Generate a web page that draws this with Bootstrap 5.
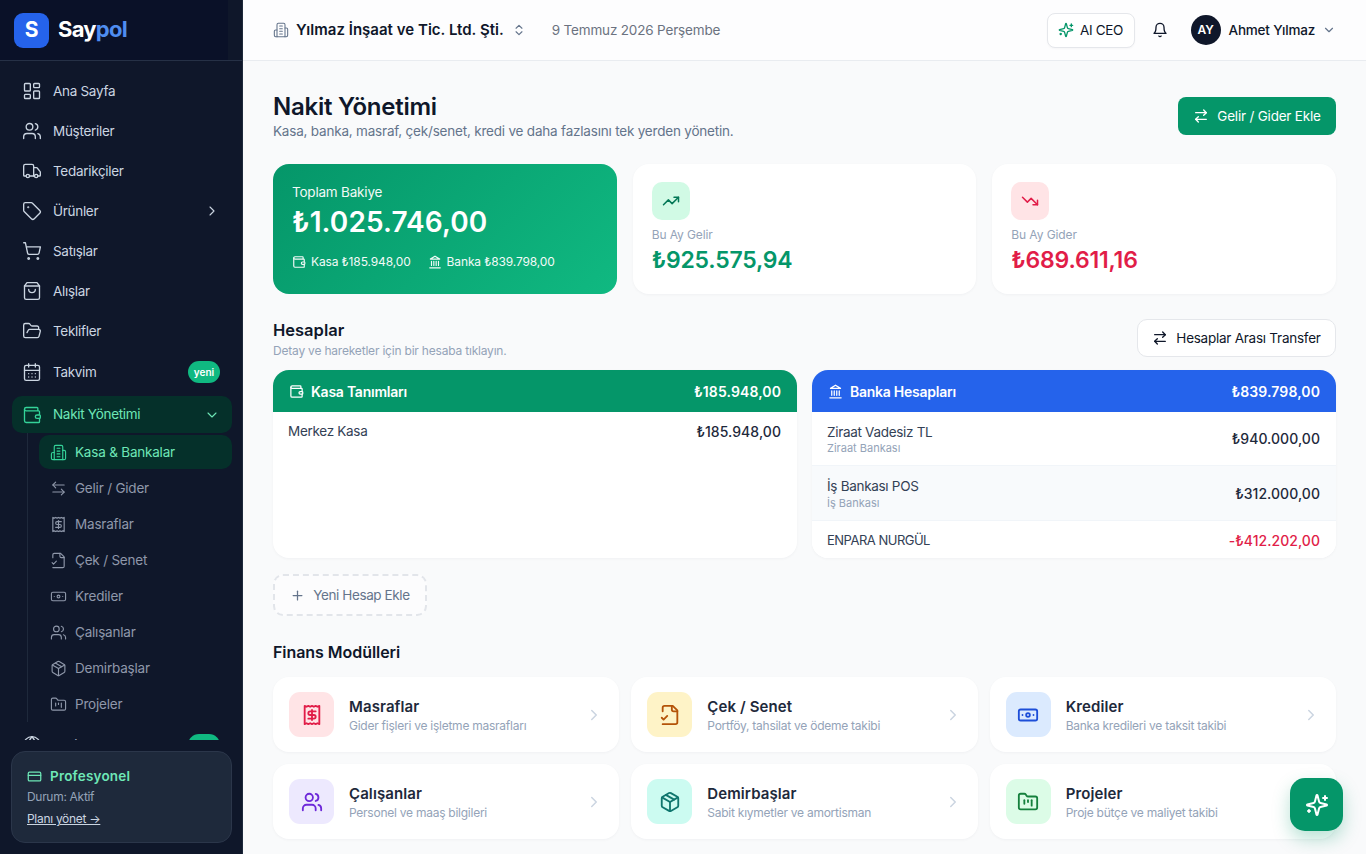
<!DOCTYPE html>
<html lang="tr">
<head>
  <meta charset="UTF-8" />
  <meta name="viewport" content="width=device-width, initial-scale=1.0" />
  <title>Saypol - Nakit Yönetimi</title>
  <link href="https://cdn.jsdelivr.net/npm/bootstrap@5.3.0/dist/css/bootstrap.min.css" rel="stylesheet">
  <style>
    html, body { height: 100%; overflow: hidden; }
    body { background: #f9fafb; font-family: "Inter", "Liberation Sans", sans-serif; color: #0f172a; font-size: 13.5px; letter-spacing: -.2px; }
    svg.ic { fill: none; stroke: currentColor; stroke-width: 2; stroke-linecap: round; stroke-linejoin: round; flex-shrink: 0; display: block; }

    .app-shell { height: 854px; }
    .side { width: 243px; background: #0f172a; border-right: 1px solid #1e293b; flex-shrink: 0; height: 854px; }
    .side-top { height: 61px; border-bottom: 1px solid #263146; flex-shrink: 0; }
    .side-brand { width: 228px; height: 60px; background: #0a1128; padding: 0 0 2px 14px; gap: 9px; }
    .logo-box { width: 35px; height: 35px; border-radius: 9px; background: #2563eb; color: #fff; font-weight: 700; font-size: 21px; margin-top: 2px; }
    .logo-word { font-size: 22px; font-weight: 700; color: #fff; letter-spacing: -.75px; }
    .logo-word span { color: #4f8df0; }
    .side-nav { height: 679px; overflow: hidden; padding: 10px 10px 0 12px; }
    .nav-row { height: 40px; padding: 0 12px 0 10px; gap: 11px; color: #cbd5e1; text-decoration: none; letter-spacing: -.3px; }
    .nav-row svg { stroke-width: 1.6; }
    .nav-row.tall { height: 42px; }
    .nav-row.open { height: 37px; margin-top: 3px; background: #05302a; border-radius: 10px; color: #6ee7b7; }
    .nav-row.open svg { color: #34d399; }
    .nav-row.open svg.chev { color: #6ee7b7; }
    .new-pill { background: #10b981; color: #fff; font-size: 10px; font-weight: 600; border-radius: 12px; width: 32px; height: 22px; letter-spacing: 0; }
    .sub-list { margin: 0 0 2px 15px; padding: 2px 0 0 11px; border-left: 1px solid #1e293b; }
    .sub-row { height: 36px; padding: 0 11px; gap: 8px; color: #8f98aa; text-decoration: none; }
    .sub-row svg { stroke-width: 1.6; }
    .sub-row.here { height: 34px; margin-bottom: 1px; background: #05302a; border-radius: 10px; color: #6ee7b7; }
    .sub-row.here svg { color: #34d399; }
    .plan-area { padding: 11px 10px 0 11px; }
    .plan-card { height: 92px; background: #1e293b; border: 1px solid #2b364a; border-radius: 14px; padding: 14px 15px; }
    .plan-name { color: #6ee7b7; font-weight: 600; letter-spacing: .2px; line-height: 21px; }
    .plan-state { color: #94a3b8; font-size: 12px; margin-top: 1px; line-height: 18px; letter-spacing: -.3px; }
    .plan-link { color: #cbd5e1; font-size: 12px; margin-top: 4px; display: inline-block; line-height: 18px; letter-spacing: -.3px; }

    .main-col { min-width: 0; height: 854px; overflow: hidden; }
    .top-bar { height: 61px; background: #fdfdfe; border-bottom: 1px solid #e9ecf0; padding: 0 30px; flex-shrink: 0; }
    .firm-icon { color: #64748b; stroke-width: 1.6 !important; margin-right: 7px; }
    .firm-name { font-weight: 600; font-size: 15px; letter-spacing: .02px; }
    .firm-arrows { color: #64748b; margin-left: 8px; }
    .today { color: #6b7280; margin-left: 26px; letter-spacing: -.17px; }
    .ceo-btn { height: 35px; width: 88px; background: #fff; border: 1px solid #e5e7eb; border-radius: 8px; font-size: 13.5px; color: #0f172a; padding: 0; gap: 6px; box-shadow: 0 1px 2px rgba(0,0,0,.03); letter-spacing: -.3px; margin-left: auto; }
    .ceo-spark { color: #059669; }
    .bell-ic { margin: 0 23px 0 17px; }
    .avatar { width: 30px; height: 30px; border-radius: 50%; background: #0f172a; color: #fff; font-size: 12px; font-weight: 600; letter-spacing: -.2px; }
    .user-name { font-weight: 500; margin-left: 8px; letter-spacing: -.2px; }
    .user-chev { color: #64748b; margin-left: 7px; }

    .page-body { padding: 32px 30px 0; }
    .page-title { font-size: 24px; font-weight: 600; line-height: 28px; margin: 0; letter-spacing: -.25px; }
    .page-sub { color: #64748b; line-height: 20px; }
    .add-btn { height: 38px; width: 158px; background: #059669; border: 0; border-radius: 8px; color: #fff; font-size: 13.5px; padding: 0; gap: 8px; margin-bottom: 2px; letter-spacing: -.2px; }
    .add-btn:hover { background: #059669; color: #fff; }

    .stat-grid { display: grid; grid-template-columns: repeat(3, 1fr); gap: 16px; margin-top: 23px; }
    .stat-box { height: 130px; border-radius: 16px; background: #fff; border: 0; box-shadow: 0 1px 3px rgba(15,23,42,.04); padding: 18px 19px; }
    .stat-box.total { background: linear-gradient(135deg, #059669, #10b981); color: #fff; padding: 20px 19px; box-shadow: none; }
    .total-label { line-height: 16px; opacity: .95; }
    .total-value { font-size: 28px; font-weight: 600; line-height: 36px; margin-top: 4px; letter-spacing: .1px; }
    .total-foot { font-size: 12px; margin-top: 13px; gap: 17px; opacity: .95; letter-spacing: -.13px; }
    .foot-item { gap: 5px; }
    .tile { width: 38px; height: 38px; border-radius: 10px; flex-shrink: 0; }
    .stat-label { color: #94a3b8; font-size: 12px; margin-top: 7px; line-height: 16px; letter-spacing: -.1px; }
    .stat-value { font-size: 23px; font-weight: 600; line-height: 30px; margin-top: 2px; letter-spacing: -.2px; }
    .val-green { color: #059669; }
    .val-red { color: #e11d48; }
    .tint-red { background: #ffe4e6; color: #e11d48; }
    .tint-green { background: #d1fae5; color: #047857; }
    .tint-amber { background: #fef3c7; color: #b45309; }
    .tint-blue { background: #dbeafe; color: #1d4ed8; }
    .tint-purple { background: #ede9fe; color: #6d28d9; }
    .tint-teal { background: #ccfbf1; color: #0f766e; }
    .tint-mint { background: #dcfce7; color: #15803d; }

    .sec-head { margin-top: 25px; height: 51px; }
    .sec-title { font-size: 16.5px; font-weight: 600; line-height: 22px; margin: 0; letter-spacing: 0; }
    .sec-sub { color: #94a3b8; font-size: 12px; line-height: 16px; margin-top: 2px; }
    .transfer-btn { height: 38px; width: 199px; background: #fff; border: 1px solid #e5e7eb; border-radius: 10px; font-size: 13.5px; color: #0f172a; padding: 0; gap: 8px; margin-bottom: 13px; letter-spacing: -.25px; }

    .acct-grid { display: grid; grid-template-columns: 1fr 1fr; gap: 15px; }
    .acct-card { height: 188px; border: 0; border-radius: 16px; background: #fff; box-shadow: 0 1px 3px rgba(15,23,42,.04); overflow: hidden; }
    .acct-head { height: 42px; padding: 0 16px; color: #fff; font-weight: 600; font-size: 14px; letter-spacing: -.25px; flex-shrink: 0; }
    .acct-head.green { background: #059669; }
    .acct-head.blue { background: #2563eb; }
    .head-title { gap: 7px; }
    .head-amt { letter-spacing: .1px; }
    .acct-list .list-group-item { padding: 0 16px 0 15px; display: flex; justify-content: space-between; align-items: center; color: #334155; border-color: #f1f5f9; letter-spacing: -.3px; }
    .acct-list .row-one { height: 39px; }
    .acct-list .row-two { height: 54px; }
    .acct-list .row-alt { background: #f8fafc; height: 55px; }
    .acct-list .row-end { height: 37px; padding-top: 2px; }
    .caps-name { font-size: 13px; letter-spacing: -.5px; }
    .acct-sub { color: #94a3b8; font-size: 11px; line-height: 13px; letter-spacing: 0; }
    .acct-amt { font-weight: 500; color: #1e293b; letter-spacing: .05px; font-size: 14px; }
    .acct-amt.neg { color: #e11d48; }

    .new-acct { height: 42px; width: 154px; margin-top: 16px; border: 2px dashed #e2e5ea; border-radius: 10px; background: #fcfcfd; color: #64748b; font-size: 13.5px; padding: 0; gap: 8px; letter-spacing: -.4px; }
    .mod-title { font-size: 16px; font-weight: 600; line-height: 22px; margin: 25px 0 14px; letter-spacing: -.05px; }
    .mod-grid { display: grid; grid-template-columns: repeat(3, 1fr); gap: 12px; }
    .mod-card { height: 75px; border: 0; border-radius: 16px; background: #fff; box-shadow: 0 1px 3px rgba(15,23,42,.04); padding: 0 16px; gap: 15px; }
    .mod-tile { width: 45px; height: 45px; border-radius: 11px; flex-shrink: 0; }
    .mod-text { padding-top: 2px; }
    .mod-name { font-size: 15px; font-weight: 600; line-height: 20px; color: #1e293b; letter-spacing: .1px; }
    .mod-desc { font-size: 12px; color: #94a3b8; line-height: 16px; margin-top: 1px; letter-spacing: -.25px; }
    .mod-chev { color: #cbd5e1; }
    .fab-btn { position: fixed; left: 1290px; top: 778px; width: 53px; height: 53px; border-radius: 15px; background: #059669; color: #fff; border: 0; padding: 0; box-shadow: 0 8px 18px rgba(5,150,105,.28); }
    .fab-btn:hover { background: #059669; color: #fff; }
  </style>
</head>
<body>
  <svg width="0" height="0" class="position-absolute">
    <symbol id="i-dash" viewBox="0 0 24 24"><rect x="3" y="3" width="7" height="9" rx="1"/><rect x="14" y="3" width="7" height="5" rx="1"/><rect x="14" y="12" width="7" height="9" rx="1"/><rect x="3" y="16" width="7" height="5" rx="1"/></symbol>
    <symbol id="i-users" viewBox="0 0 24 24"><path d="M16 21v-2a4 4 0 0 0-4-4H6a4 4 0 0 0-4 4v2"/><circle cx="9" cy="7" r="4"/><path d="M22 21v-2a4 4 0 0 0-3-3.87"/><path d="M16 3.13a4 4 0 0 1 0 7.75"/></symbol>
    <symbol id="i-truck" viewBox="0 0 24 24"><path d="M14 18V6a2 2 0 0 0-2-2H4a2 2 0 0 0-2 2v11a1 1 0 0 0 1 1h2"/><path d="M15 18H9"/><path d="M19 18h2a1 1 0 0 0 1-1v-3.65a1 1 0 0 0-.22-.624l-3.48-4.35A1 1 0 0 0 17.52 8H14"/><circle cx="17" cy="18" r="2"/><circle cx="7" cy="18" r="2"/></symbol>
    <symbol id="i-tag" viewBox="0 0 24 24"><path d="M12.586 2.586A2 2 0 0 0 11.172 2H4a2 2 0 0 0-2 2v7.172a2 2 0 0 0 .586 1.414l8.704 8.704a2.426 2.426 0 0 0 3.42 0l6.58-6.58a2.426 2.426 0 0 0 0-3.42z"/><circle cx="7.5" cy="7.5" r=".5"/></symbol>
    <symbol id="i-cart" viewBox="0 0 24 24"><circle cx="8" cy="21" r="1"/><circle cx="19" cy="21" r="1"/><path d="M2.05 2.05h2l2.66 12.42a2 2 0 0 0 2 1.58h9.78a2 2 0 0 0 1.95-1.57l1.65-7.43H5.12"/></symbol>
    <symbol id="i-bag" viewBox="0 0 24 24"><path d="M6 2 3 6v14a2 2 0 0 0 2 2h14a2 2 0 0 0 2-2V6l-3-4Z"/><path d="M3 6h18"/><path d="M16 10a4 4 0 0 1-8 0"/></symbol>
    <symbol id="i-folder-open" viewBox="0 0 24 24"><path d="m6 14 1.5-2.9A2 2 0 0 1 9.24 10H20a2 2 0 0 1 1.94 2.5l-1.54 6a2 2 0 0 1-1.95 1.5H4a2 2 0 0 1-2-2V5a2 2 0 0 1 2-2h3.9a2 2 0 0 1 1.69.9l.81 1.2a2 2 0 0 0 1.67.9H18a2 2 0 0 1 2 2v2"/></symbol>
    <symbol id="i-cal" viewBox="0 0 24 24"><path d="M8 2v4"/><path d="M16 2v4"/><rect x="3" y="4" width="18" height="18" rx="2"/><path d="M3 10h18"/><path d="M8 14h.01"/><path d="M12 14h.01"/><path d="M16 14h.01"/><path d="M8 18h.01"/><path d="M12 18h.01"/><path d="M16 18h.01"/></symbol>
    <symbol id="i-wallet" viewBox="0 0 24 24"><path d="M19 7V4a1 1 0 0 0-1-1H5a2 2 0 0 0 0 4h15a1 1 0 0 1 1 1v4h-3a2 2 0 0 0 0 4h3a1 1 0 0 0 1-1v-2a1 1 0 0 0-1-1"/><path d="M3 5v14a2 2 0 0 0 2 2h15a1 1 0 0 0 1-1v-4"/></symbol>
    <symbol id="i-building" viewBox="0 0 24 24"><path d="M6 22V4a2 2 0 0 1 2-2h8a2 2 0 0 1 2 2v18Z"/><path d="M6 12H4a2 2 0 0 0-2 2v6a2 2 0 0 0 2 2h2"/><path d="M18 9h2a2 2 0 0 1 2 2v9a2 2 0 0 1-2 2h-2"/><path d="M10 6h4"/><path d="M10 10h4"/><path d="M10 14h4"/><path d="M10 18h4"/></symbol>
    <symbol id="i-left-right" viewBox="0 0 24 24"><path d="M8 3 4 7l4 4"/><path d="M4 7h16"/><path d="m16 21 4-4-4-4"/><path d="M20 17H4"/></symbol>
    <symbol id="i-right-left" viewBox="0 0 24 24"><path d="m16 3 4 4-4 4"/><path d="M20 7H4"/><path d="m8 21-4-4 4-4"/><path d="M4 17h16"/></symbol>
    <symbol id="i-receipt" viewBox="0 0 24 24"><path d="M4 2v20l2-1 2 1 2-1 2 1 2-1 2 1 2-1 2 1V2l-2 1-2-1-2 1-2-1-2 1-2-1-2 1Z"/><path d="M16 8h-6a2 2 0 1 0 0 4h4a2 2 0 1 1 0 4H8"/><path d="M12 17.5v-11"/></symbol>
    <symbol id="i-file-check" viewBox="0 0 24 24"><path d="M4 22h14a2 2 0 0 0 2-2V7l-5-5H6a2 2 0 0 0-2 2v4"/><path d="M14 2v4a2 2 0 0 0 2 2h4"/><path d="m3 15 2 2 4-4"/></symbol>
    <symbol id="i-banknote" viewBox="0 0 24 24"><rect x="2" y="6" width="20" height="12" rx="2"/><circle cx="12" cy="12" r="2"/><path d="M6 12h.01M18 12h.01"/></symbol>
    <symbol id="i-box" viewBox="0 0 24 24"><path d="M11 21.73a2 2 0 0 0 2 0l7-4A2 2 0 0 0 21 16V8a2 2 0 0 0-1-1.73l-7-4a2 2 0 0 0-2 0l-7 4A2 2 0 0 0 3 8v8a2 2 0 0 0 1 1.73z"/><path d="M12 22V12"/><path d="M3.29 7 12 12l8.71-5"/><path d="m7.5 4.27 9 5.15"/></symbol>
    <symbol id="i-kanban" viewBox="0 0 24 24"><path d="M4 20h16a2 2 0 0 0 2-2V8a2 2 0 0 0-2-2h-7.93a2 2 0 0 1-1.66-.9l-.82-1.2A2 2 0 0 0 7.93 3H4a2 2 0 0 0-2 2v13c0 1.1.9 2 2 2Z"/><path d="M8 10v4"/><path d="M12 10v2"/><path d="M16 10v6"/></symbol>
    <symbol id="i-bank" viewBox="0 0 24 24"><path d="M3 22h18"/><path d="M6 18v-7"/><path d="M10 18v-7"/><path d="M14 18v-7"/><path d="M18 18v-7"/><path d="M12 2l8 5H4Z"/></symbol>
    <symbol id="i-updown" viewBox="0 0 24 24"><path d="m7 15 5 5 5-5"/><path d="m7 9 5-5 5 5"/></symbol>
    <symbol id="i-spark" viewBox="0 0 24 24"><path d="M9.937 15.5A2 2 0 0 0 8.5 14.063l-6.135-1.582a.5.5 0 0 1 0-.962L8.5 9.936A2 2 0 0 0 9.937 8.5l1.582-6.135a.5.5 0 0 1 .963 0L14.063 8.5A2 2 0 0 0 15.5 9.937l6.135 1.581a.5.5 0 0 1 0 .964L15.5 14.063a2 2 0 0 0-1.437 1.437l-1.582 6.135a.5.5 0 0 1-.963 0z"/><path d="M20 3v4"/><path d="M22 5h-4"/><path d="M4 17v2"/><path d="M5 18H3"/></symbol>
    <symbol id="i-bell" viewBox="0 0 24 24"><path d="M6 8a6 6 0 0 1 12 0c0 7 3 9 3 9H3s3-2 3-9"/><path d="M10.3 21a1.94 1.94 0 0 0 3.4 0"/></symbol>
    <symbol id="i-up" viewBox="0 0 24 24"><path d="M22 7l-8.5 8.5-5-5L2 17"/><path d="M16 7h6v6"/></symbol>
    <symbol id="i-down" viewBox="0 0 24 24"><path d="M22 17l-8.5-8.5-5 5L2 7"/><path d="M16 17h6v-6"/></symbol>
    <symbol id="i-card" viewBox="0 0 24 24"><rect x="2" y="5" width="20" height="14" rx="2"/><path d="M2 10h20"/></symbol>
    <symbol id="i-plus" viewBox="0 0 24 24"><path d="M5 12h14"/><path d="M12 5v14"/></symbol>
    <symbol id="i-chev-r" viewBox="0 0 24 24"><path d="m9 18 6-6-6-6"/></symbol>
    <symbol id="i-chev-d" viewBox="0 0 24 24"><path d="m6 9 6 6 6-6"/></symbol>
    <symbol id="i-globe" viewBox="0 0 24 24"><circle cx="12" cy="12" r="10"/><path d="M12 2a14.5 14.5 0 0 0 0 20 14.5 14.5 0 0 0 0-20"/><path d="M2 12h20"/></symbol>
  </svg>

  <div class="app-shell d-flex">
    <aside class="side d-flex flex-column">
      <div class="side-top">
        <div class="side-brand d-flex align-items-center">
          <div class="logo-box d-flex align-items-center justify-content-center">S</div>
          <div class="logo-word">Say<span>pol</span></div>
        </div>
      </div>
      <nav class="side-nav">
        <a class="nav-row d-flex align-items-center" href="#"><svg class="ic" width="20" height="20"><use href="#i-dash"/></svg>Ana Sayfa</a>
        <a class="nav-row d-flex align-items-center" href="#"><svg class="ic" width="20" height="20"><use href="#i-users"/></svg>Müşteriler</a>
        <a class="nav-row d-flex align-items-center" href="#"><svg class="ic" width="20" height="20"><use href="#i-truck"/></svg>Tedarikçiler</a>
        <a class="nav-row d-flex align-items-center" href="#"><svg class="ic" width="20" height="20"><use href="#i-tag"/></svg>Ürünler<svg class="ic chev ms-auto" width="16" height="16"><use href="#i-chev-r"/></svg></a>
        <a class="nav-row d-flex align-items-center" href="#"><svg class="ic" width="20" height="20"><use href="#i-cart"/></svg>Satışlar</a>
        <a class="nav-row d-flex align-items-center" href="#"><svg class="ic" width="20" height="20"><use href="#i-bag"/></svg>Alışlar</a>
        <a class="nav-row d-flex align-items-center" href="#"><svg class="ic" width="20" height="20"><use href="#i-folder-open"/></svg>Teklifler</a>
        <a class="nav-row tall d-flex align-items-center" href="#"><svg class="ic" width="20" height="20"><use href="#i-cal"/></svg>Takvim<span class="new-pill d-flex align-items-center justify-content-center ms-auto">yeni</span></a>
        <a class="nav-row open d-flex align-items-center" href="#"><svg class="ic" width="20" height="20"><use href="#i-wallet"/></svg>Nakit Yönetimi<svg class="ic chev ms-auto" width="16" height="16"><use href="#i-chev-d"/></svg></a>
        <div class="sub-list">
          <a class="sub-row here d-flex align-items-center" href="#"><svg class="ic" width="17" height="17"><use href="#i-building"/></svg>Kasa &amp; Bankalar</a>
          <a class="sub-row d-flex align-items-center" href="#"><svg class="ic" width="17" height="17"><use href="#i-left-right"/></svg>Gelir / Gider</a>
          <a class="sub-row d-flex align-items-center" href="#"><svg class="ic" width="17" height="17"><use href="#i-receipt"/></svg>Masraflar</a>
          <a class="sub-row d-flex align-items-center" href="#"><svg class="ic" width="17" height="17"><use href="#i-file-check"/></svg>Çek / Senet</a>
          <a class="sub-row d-flex align-items-center" href="#"><svg class="ic" width="17" height="17"><use href="#i-banknote"/></svg>Krediler</a>
          <a class="sub-row d-flex align-items-center" href="#"><svg class="ic" width="17" height="17"><use href="#i-users"/></svg>Çalışanlar</a>
          <a class="sub-row d-flex align-items-center" href="#"><svg class="ic" width="17" height="17"><use href="#i-box"/></svg>Demirbaşlar</a>
          <a class="sub-row d-flex align-items-center" href="#"><svg class="ic" width="17" height="17"><use href="#i-kanban"/></svg>Projeler</a>
        </div>
        <a class="nav-row tall d-flex align-items-center" href="#"><svg class="ic" width="20" height="20"><use href="#i-globe"/></svg>E-Ticaret<span class="new-pill d-flex align-items-center justify-content-center ms-auto">yeni</span></a>
      </nav>
      <div class="plan-area">
        <div class="plan-card">
          <div class="plan-name d-flex align-items-center gap-2"><svg class="ic" width="15" height="15"><use href="#i-card"/></svg>Profesyonel</div>
          <div class="plan-state">Durum: Aktif</div>
          <a class="plan-link" href="#">Planı yönet →</a>
        </div>
      </div>
    </aside>

    <div class="main-col flex-grow-1 d-flex flex-column">
      <header class="top-bar d-flex align-items-center">
        <svg class="ic firm-icon" width="16" height="16"><use href="#i-building"/></svg>
        <span class="firm-name">Yılmaz İnşaat ve Tic. Ltd. Şti.</span>
        <svg class="ic firm-arrows" width="14" height="14"><use href="#i-updown"/></svg>
        <span class="today">9 Temmuz 2026 Perşembe</span>
        <button class="ceo-btn btn d-flex align-items-center justify-content-center"><svg class="ic ceo-spark" width="16" height="16"><use href="#i-spark"/></svg>AI CEO</button>
        <svg class="ic bell-ic" width="16" height="16"><use href="#i-bell"/></svg>
        <div class="avatar d-flex align-items-center justify-content-center">AY</div>
        <span class="user-name">Ahmet Yılmaz</span>
        <svg class="ic user-chev" width="14" height="14"><use href="#i-chev-d"/></svg>
      </header>

      <main class="page-body">
        <div class="d-flex justify-content-between align-items-center">
          <div>
            <h1 class="page-title">Nakit Yönetimi</h1>
            <div class="page-sub">Kasa, banka, masraf, çek/senet, kredi ve daha fazlasını tek yerden yönetin.</div>
          </div>
          <button class="add-btn btn d-flex align-items-center justify-content-center"><svg class="ic" width="16" height="16"><use href="#i-right-left"/></svg>Gelir / Gider Ekle</button>
        </div>

        <div class="stat-grid">
          <div class="stat-box total card">
            <div class="total-label">Toplam Bakiye</div>
            <div class="total-value">₺1.025.746,00</div>
            <div class="total-foot d-flex">
              <span class="foot-item d-flex align-items-center"><svg class="ic" width="14" height="14"><use href="#i-wallet"/></svg>Kasa ₺185.948,00</span>
              <span class="foot-item d-flex align-items-center"><svg class="ic" width="14" height="14"><use href="#i-bank"/></svg>Banka ₺839.798,00</span>
            </div>
          </div>
          <div class="stat-box card">
            <div class="tile tint-green d-flex align-items-center justify-content-center"><svg class="ic" width="18" height="18"><use href="#i-up"/></svg></div>
            <div class="stat-label">Bu Ay Gelir</div>
            <div class="stat-value val-green">₺925.575,94</div>
          </div>
          <div class="stat-box card">
            <div class="tile tint-red d-flex align-items-center justify-content-center"><svg class="ic" width="18" height="18"><use href="#i-down"/></svg></div>
            <div class="stat-label">Bu Ay Gider</div>
            <div class="stat-value val-red">₺689.611,16</div>
          </div>
        </div>

        <div class="sec-head d-flex justify-content-between align-items-start">
          <div>
            <h2 class="sec-title">Hesaplar</h2>
            <div class="sec-sub">Detay ve hareketler için bir hesaba tıklayın.</div>
          </div>
          <button class="transfer-btn btn d-flex align-items-center justify-content-center"><svg class="ic" width="16" height="16"><use href="#i-right-left"/></svg>Hesaplar Arası Transfer</button>
        </div>

        <div class="acct-grid">
          <div class="acct-card card">
            <div class="acct-head green d-flex align-items-center justify-content-between">
              <span class="head-title d-flex align-items-center"><svg class="ic" width="15" height="15"><use href="#i-wallet"/></svg>Kasa Tanımları</span>
              <span class="head-amt">₺185.948,00</span>
            </div>
            <ul class="acct-list list-group list-group-flush">
              <li class="list-group-item row-one"><span>Merkez Kasa</span><span class="acct-amt">₺185.948,00</span></li>
            </ul>
          </div>
          <div class="acct-card card">
            <div class="acct-head blue d-flex align-items-center justify-content-between">
              <span class="head-title d-flex align-items-center"><svg class="ic" width="15" height="15"><use href="#i-bank"/></svg>Banka Hesapları</span>
              <span class="head-amt">₺839.798,00</span>
            </div>
            <ul class="acct-list list-group list-group-flush">
              <li class="list-group-item row-two"><div><div>Ziraat Vadesiz TL</div><div class="acct-sub">Ziraat Bankası</div></div><span class="acct-amt">₺940.000,00</span></li>
              <li class="list-group-item row-two row-alt"><div><div>İş Bankası POS</div><div class="acct-sub">İş Bankası</div></div><span class="acct-amt">₺312.000,00</span></li>
              <li class="list-group-item row-end"><span class="caps-name">ENPARA NURGÜL</span><span class="acct-amt neg">-₺412.202,00</span></li>
            </ul>
          </div>
        </div>

        <button class="new-acct btn d-flex align-items-center justify-content-center"><svg class="ic" width="15" height="15"><use href="#i-plus"/></svg>Yeni Hesap Ekle</button>

        <h2 class="mod-title">Finans Modülleri</h2>
        <div class="mod-grid">
          <div class="mod-card card flex-row align-items-center"><div class="mod-tile tint-red d-flex align-items-center justify-content-center"><svg class="ic" width="22" height="22"><use href="#i-receipt"/></svg></div><div class="mod-text flex-grow-1"><div class="mod-name">Masraflar</div><div class="mod-desc">Gider fişleri ve işletme masrafları</div></div><svg class="ic mod-chev" width="18" height="18"><use href="#i-chev-r"/></svg></div>
          <div class="mod-card card flex-row align-items-center"><div class="mod-tile tint-amber d-flex align-items-center justify-content-center"><svg class="ic" width="22" height="22"><use href="#i-file-check"/></svg></div><div class="mod-text flex-grow-1"><div class="mod-name">Çek / Senet</div><div class="mod-desc">Portföy, tahsilat ve ödeme takibi</div></div><svg class="ic mod-chev" width="18" height="18"><use href="#i-chev-r"/></svg></div>
          <div class="mod-card card flex-row align-items-center"><div class="mod-tile tint-blue d-flex align-items-center justify-content-center"><svg class="ic" width="22" height="22"><use href="#i-banknote"/></svg></div><div class="mod-text flex-grow-1"><div class="mod-name">Krediler</div><div class="mod-desc">Banka kredileri ve taksit takibi</div></div><svg class="ic mod-chev" width="18" height="18"><use href="#i-chev-r"/></svg></div>
          <div class="mod-card card flex-row align-items-center"><div class="mod-tile tint-purple d-flex align-items-center justify-content-center"><svg class="ic" width="22" height="22"><use href="#i-users"/></svg></div><div class="mod-text flex-grow-1"><div class="mod-name">Çalışanlar</div><div class="mod-desc">Personel ve maaş bilgileri</div></div><svg class="ic mod-chev" width="18" height="18"><use href="#i-chev-r"/></svg></div>
          <div class="mod-card card flex-row align-items-center"><div class="mod-tile tint-teal d-flex align-items-center justify-content-center"><svg class="ic" width="22" height="22"><use href="#i-box"/></svg></div><div class="mod-text flex-grow-1"><div class="mod-name">Demirbaşlar</div><div class="mod-desc">Sabit kıymetler ve amortisman</div></div><svg class="ic mod-chev" width="18" height="18"><use href="#i-chev-r"/></svg></div>
          <div class="mod-card card flex-row align-items-center"><div class="mod-tile tint-mint d-flex align-items-center justify-content-center"><svg class="ic" width="22" height="22"><use href="#i-kanban"/></svg></div><div class="mod-text flex-grow-1"><div class="mod-name">Projeler</div><div class="mod-desc">Proje bütçe ve maliyet takibi</div></div><svg class="ic mod-chev" width="18" height="18"><use href="#i-chev-r"/></svg></div>
        </div>
      </main>
    </div>
  </div>

  <button class="fab-btn btn d-flex align-items-center justify-content-center"><svg class="ic" width="24" height="24"><use href="#i-spark"/></svg></button>

  <script src="https://cdn.jsdelivr.net/npm/bootstrap@5.3.0/dist/js/bootstrap.bundle.min.js"></script>
</body>
</html>
